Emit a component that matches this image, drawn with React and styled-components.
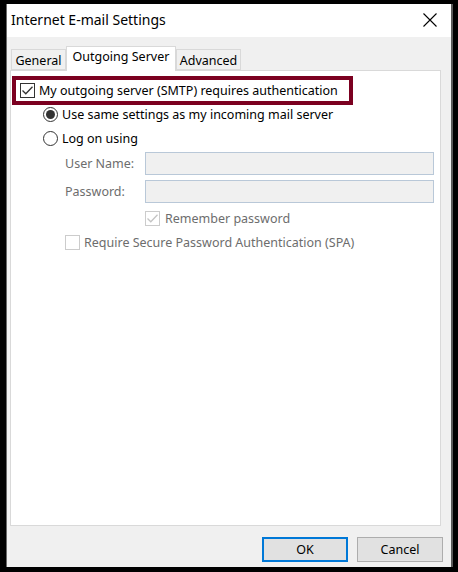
import React from "react";
import styled, { createGlobalStyle } from "styled-components";

const GlobalStyle = createGlobalStyle`
  html, body {
    margin: 0;
    padding: 0;
    background: #000;
  }
  body {
    font-family: "Noto Sans", "Open Sans", sans-serif;
    font-size: 12.5px;
    color: #000;
  }
`;

const App = () => {
  return (
    <>
      <GlobalStyle />
      <Window>
        <TitleBar>
          <Title>Internet E-mail Settings</Title>
          <CloseIcon width="16" height="16" viewBox="0 0 16 16">
            <path d="M1.5 1.5 L14.5 14.5 M14.5 1.5 L1.5 14.5" stroke="#000" strokeWidth="1.1" />
          </CloseIcon>
        </TitleBar>
        <Content>
          <Tabs>
            <Tab $w={55}>General</Tab>
            <Tab $w={110} $active>Outgoing Server</Tab>
            <Tab $w={65}>Advanced</Tab>
          </Tabs>
          <Panel>
            <Highlight>
              <Check checked />
              <Label>My outgoing server (SMTP) requires authentication</Label>
            </Highlight>
            <Options>
              <OptionRow>
                <Radio checked />
                <Label>Use same settings as my incoming mail server</Label>
              </OptionRow>
              <OptionRow>
                <Radio />
                <Label>Log on using</Label>
              </OptionRow>
            </Options>
            <FormGrid>
              <FieldLabel>User Name:</FieldLabel>
              <Input />
              <FieldLabel>Password:</FieldLabel>
              <Input />
            </FormGrid>
            <RememberRow>
              <Check checked disabled />
              <Label $disabled>Remember password</Label>
            </RememberRow>
            <SpaRow>
              <Check disabled />
              <Label $disabled>Require Secure Password Authentication (SPA)</Label>
            </SpaRow>
          </Panel>
          <Buttons>
            <Button $default>OK</Button>
            <Button>Cancel</Button>
          </Buttons>
        </Content>
      </Window>
    </>
  );
};

const Check = ({ checked, disabled }) => (
  <CheckBox $disabled={disabled}>
    {checked && (
      <svg width="13" height="13" viewBox="0 0 13 13">
        <path
          d="M1.5 6.5 L4.8 9.8 L11.5 2.8"
          fill="none"
          stroke={disabled ? "#c4c4c4" : "#333"}
          strokeWidth="1.3"
        />
      </svg>
    )}
  </CheckBox>
);

const Radio = ({ checked }) => (
  <RadioCircle>{checked && <RadioDot />}</RadioCircle>
);

export default App;

const Window = styled.div`
  margin: 4px 0 0 6px;
  width: 447px;
  height: 563px;
  box-sizing: border-box;
  border-left: 1px solid #6a6a6a;
  border-right: 2px solid #5a5a5a;
  background: #f0f0f0;
  display: flex;
  flex-direction: column;
`;

const TitleBar = styled.div`
  height: 33px;
  background: #fff;
  display: flex;
  align-items: center;
  justify-content: space-between;
  padding: 0 13px 0 4px;
  flex-shrink: 0;
`;

const Title = styled.div`
  font-size: 14px;
  color: #000;
  margin-top: -2px;
`;

const CloseIcon = styled.svg`
  margin-top: -2px;
`;

const Content = styled.div`
  flex: 1;
  display: flex;
  flex-direction: column;
  padding: 9px 10px 0 3px;
`;

const Tabs = styled.div`
  display: flex;
  align-items: flex-end;
  height: 24px;
  padding-left: 1px;
`;

const Tab = styled.div`
  position: relative;
  z-index: ${(p) => (p.$active ? 1 : 0)};
  box-sizing: border-box;
  width: ${(p) => p.$w}px;
  height: ${(p) => (p.$active ? 25 : 21)}px;
  margin-bottom: ${(p) => (p.$active ? -1 : 0)}px;
  border: 1px solid #d9d9d9;
  border-bottom: ${(p) => (p.$active ? "none" : "1px solid #d9d9d9")};
  background: ${(p) => (p.$active ? "#fff" : "#f0f0f0")};
  display: flex;
  justify-content: center;
  padding-top: ${(p) => (p.$active ? 1 : 2)}px;
  font-size: 12.5px;
  line-height: 17px;
`;

const Panel = styled.div`
  box-sizing: border-box;
  height: 456px;
  background: #fff;
  border: 1px solid #d9d9d9;
  padding: 5px 0 0 1px;
  display: flex;
  flex-direction: column;
`;

const Highlight = styled.div`
  box-sizing: border-box;
  width: 341px;
  height: 29px;
  border: 4px solid #7b0020;
  display: flex;
  align-items: center;
  gap: 4px;
  padding-left: 4px;
`;

const Label = styled.span`
  font-size: 12.5px;
  line-height: 17px;
  color: ${(p) => (p.$disabled ? "#6d6d6d" : "#000")};
  white-space: nowrap;
`;

const CheckBox = styled.span`
  box-sizing: border-box;
  width: 15px;
  height: 15px;
  flex-shrink: 0;
  border: 1px solid ${(p) => (p.$disabled ? "#cccccc" : "#333")};
  background: #fff;
  display: flex;
  align-items: center;
  justify-content: center;
`;

const Options = styled.div`
  display: flex;
  flex-direction: column;
  gap: 5px;
  padding-left: 31px;
`;

const OptionRow = styled.div`
  display: flex;
  align-items: center;
  gap: 4px;
  height: 19px;
`;

const RadioCircle = styled.span`
  box-sizing: border-box;
  width: 15px;
  height: 15px;
  border-radius: 50%;
  border: 1px solid #333;
  display: flex;
  align-items: center;
  justify-content: center;
  flex-shrink: 0;
`;

const RadioDot = styled.span`
  width: 9px;
  height: 9px;
  border-radius: 50%;
  background: #333;
`;

const FormGrid = styled.div`
  display: grid;
  grid-template-columns: 80px 289px;
  grid-auto-rows: 23px;
  row-gap: 5px;
  align-items: center;
  padding-left: 53px;
  margin-top: 4px;
`;

const FieldLabel = styled.span`
  font-size: 12.5px;
  color: #6d6d6d;
`;

const Input = styled.div`
  box-sizing: border-box;
  height: 23px;
  background: #f0f0f0;
  border: 1px solid #b9c8d8;
`;

const RememberRow = styled.div`
  display: flex;
  align-items: center;
  gap: 5px;
  padding-left: 133px;
  margin-top: 7px;
`;

const SpaRow = styled.div`
  display: flex;
  align-items: center;
  gap: 4px;
  padding-left: 53px;
  margin-top: 7px;
`;

const Buttons = styled.div`
  display: flex;
  justify-content: flex-end;
  gap: 9px;
  margin-top: 11px;
  margin-right: -2px;
`;

const Button = styled.div`
  box-sizing: border-box;
  width: 86px;
  height: 25px;
  background: #e1e1e1;
  border: ${(p) => (p.$default ? "2px solid #0078d7" : "1px solid #adadad")};
  display: flex;
  align-items: center;
  justify-content: center;
  font-size: 12.5px;
`;
